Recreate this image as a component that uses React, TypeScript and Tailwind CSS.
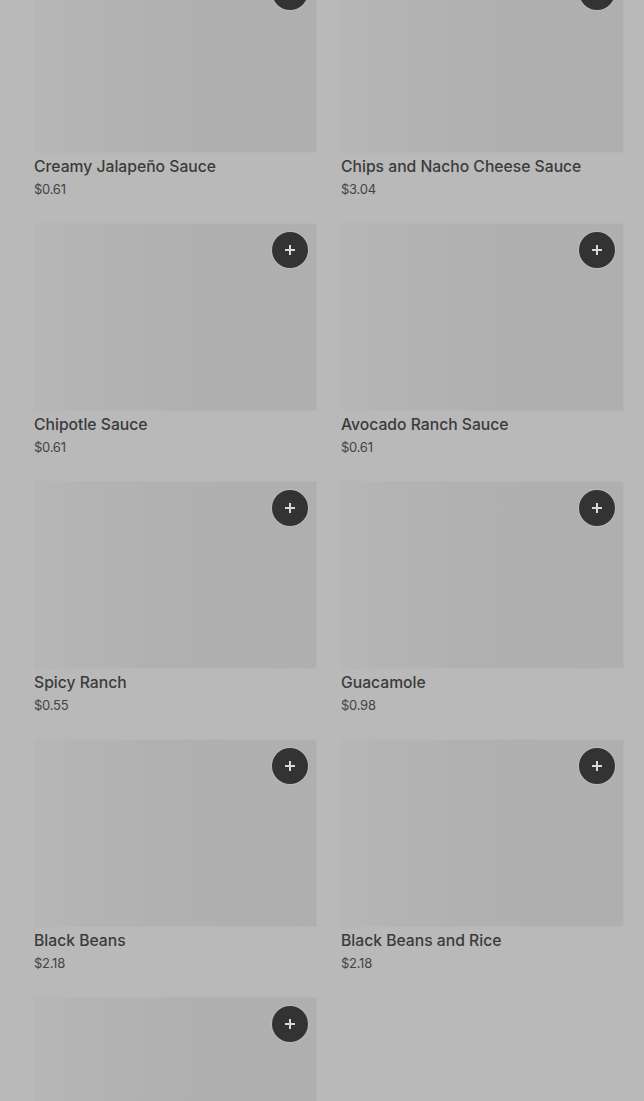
const ITEMS = [
  { name: "Creamy Jalapeño Sauce", price: "$0.61" },
  { name: "Chips and Nacho Cheese Sauce", price: "$3.04" },
  { name: "Chipotle Sauce", price: "$0.61" },
  { name: "Avocado Ranch Sauce", price: "$0.61" },
  { name: "Spicy Ranch", price: "$0.55" },
  { name: "Guacamole", price: "$0.98" },
  { name: "Black Beans", price: "$2.18" },
  { name: "Black Beans and Rice", price: "$2.18" },
];

function Thumb() {
  return (
    <div className="relative h-[188px] border border-[#b5b5b5] bg-gradient-to-r from-[#b6b6b6] via-[#b0b0b0] to-[#afafaf]">
      <button className="absolute right-[8px] top-[8px] flex h-9 w-9 items-center justify-center rounded-full bg-[#333333] shadow-[0_0_0_1px_rgba(255,255,255,0.15)]">
        <svg width="12" height="12" viewBox="0 0 12 12">
          <path d="M6 1v10M1 6h10" stroke="#d8d8d8" strokeWidth="2" />
        </svg>
      </button>
    </div>
  );
}

function Card({ name, price }: { name: string; price: string }) {
  return (
    <div className="flex flex-col">
      <Thumb />
      <div className="mt-[2px] text-[15.7px] leading-6 font-medium text-[#3b3b3b]">{name}</div>
      <div className="text-[13px] leading-5 tracking-[-0.02em] text-[#444444]">{price}</div>
    </div>
  );
}

export default function App() {
  return (
    <main
      className="h-[1101px] overflow-hidden bg-[#b9b9b9] pl-[34px] pr-[20px]"
      style={{ fontFamily: "Inter, 'Noto Sans', sans-serif" }}
    >
      <div className="-mt-[35px] grid grid-cols-2 gap-x-6 gap-y-6">
        {ITEMS.map((it) => (
          <Card key={it.name} name={it.name} price={it.price} />
        ))}
        <div className="flex flex-col">
          <Thumb />
        </div>
      </div>
    </main>
  );
}
